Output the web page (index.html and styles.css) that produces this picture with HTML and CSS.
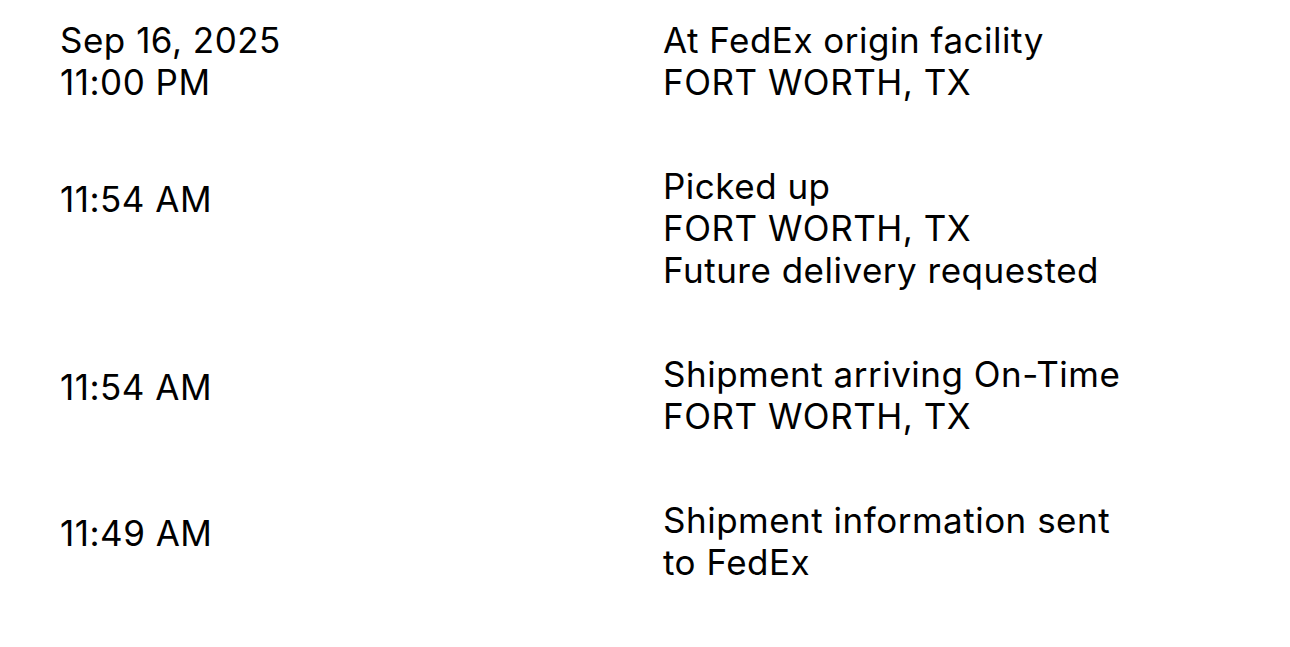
FILE: index.html
```html
<!DOCTYPE html>
<html lang="en">
<head>
<meta charset="utf-8">
<title>Tracking history</title>
<link rel="stylesheet" href="styles.css">
</head>
<body>
<div class="timeline">
  <div class="row">
    <div class="when">Sep 16, 2025<br>11:00 PM</div>
    <div class="what">At FedEx origin facility<br>FORT WORTH, TX</div>
  </div>
  <div class="row">
    <div class="when offset">11:54 AM</div>
    <div class="what">Picked up<br>FORT WORTH, TX<br>Future delivery requested</div>
  </div>
  <div class="row">
    <div class="when offset">11:54 AM</div>
    <div class="what">Shipment arriving On-Time<br>FORT WORTH, TX</div>
  </div>
  <div class="row">
    <div class="when offset">11:49 AM</div>
    <div class="what narrow">Shipment information sent to FedEx</div>
  </div>
</div>
</body>
</html>
```
FILE: styles.css
```css
html, body {
  margin: 0;
  padding: 0;
  background: #ffffff;
}
body {
  font-family: Inter, "Noto Sans", sans-serif;
  font-size: 35px;
  line-height: 42px;
  letter-spacing: 0.5px;
  color: #000000;
}
.timeline {
  display: flex;
  flex-direction: column;
  gap: 62px;
  padding: 19px 0 0 60px;
}
.row {
  display: grid;
  grid-template-columns: 603px 1fr;
}
.offset {
  padding-top: 13px;
}
.narrow {
  max-width: 470px;
}
```
